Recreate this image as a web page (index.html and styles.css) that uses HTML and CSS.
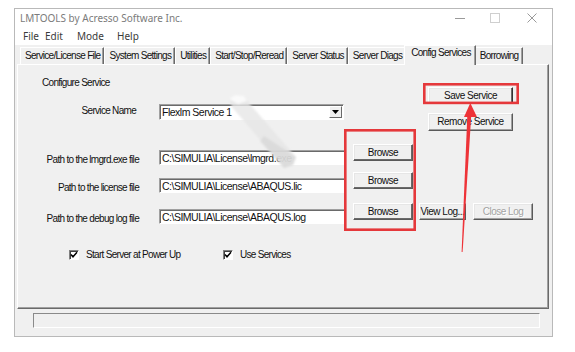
FILE: index.html
```html
<!DOCTYPE html>
<html>
<head>
<meta charset="utf-8">
<link rel="stylesheet" href="styles.css">
</head>
<body>
<div class="window">
  <div class="titlebar">
    <span class="title">LMTOOLS by Acresso Software Inc.</span>
    <div class="controls">
      <span class="ctl ctl-min"><svg width="10" height="10" viewBox="0 0 10 10"><path d="M0 5.5H10" stroke="#9a9a9a" stroke-width="1"/></svg></span>
      <span class="ctl ctl-max"><svg width="10" height="10" viewBox="0 0 10 10"><rect x="0.5" y="0.5" width="9" height="9" fill="none" stroke="#cfcfcf" stroke-width="1"/></svg></span>
      <span class="ctl ctl-close"><svg width="10" height="10" viewBox="0 0 10 10"><path d="M0.5 0.5L9.5 9.5M9.5 0.5L0.5 9.5" stroke="#9a9a9a" stroke-width="1"/></svg></span>
    </div>
  </div>
  <div class="menubar">
    <span class="menu m-file">File</span>
    <span class="menu m-edit">Edit</span>
    <span class="menu m-mode">Mode</span>
    <span class="menu m-help">Help</span>
  </div>
  <div class="tabs">
    <div class="tab">Service/License File</div>
    <div class="tab">System Settings</div>
    <div class="tab">Utilities</div>
    <div class="tab">Start/Stop/Reread</div>
    <div class="tab">Server Status</div>
    <div class="tab">Server Diags</div>
    <div class="tab tab-active">Config Services</div>
    <div class="tab">Borrowing</div>
  </div>
  <div class="panel">
    <div class="top">
      <div class="top-left">
        <div class="heading">Configure Service</div>
        <div class="name-row">
          <span class="lbl lbl-name">Service Name</span>
          <div class="combo">
            <span class="combo-text">Flexlm Service 1</span>
            <span class="drop"><svg width="7" height="4" viewBox="0 0 7 4"><path d="M0 0H7L3.5 4Z" fill="#000"/></svg></span>
          </div>
        </div>
      </div>
      <div class="top-right">
        <div class="btn btn-wide btn-default">Save Service</div>
        <div class="btn btn-wide btn-remove">Remove Service</div>
      </div>
    </div>
    <div class="path-row r1">
      <span class="lbl">Path to the lmgrd.exe file</span>
      <div class="field">C:\SIMULIA\License\lmgrd.exe</div>
      <div class="btn btn-browse">Browse</div>
    </div>
    <div class="path-row r2">
      <span class="lbl">Path to the license file</span>
      <div class="field">C:\SIMULIA\License\ABAQUS.lic</div>
      <div class="btn btn-browse">Browse</div>
    </div>
    <div class="path-row r3">
      <span class="lbl">Path to the debug log file</span>
      <div class="field">C:\SIMULIA\License\ABAQUS.log</div>
      <div class="btn btn-browse">Browse</div>
      <div class="btn btn-view">View Log...</div>
      <div class="btn btn-close btn-disabled">Close Log</div>
    </div>
    <div class="check-row">
      <div class="check-item check-first">
        <span class="box"><svg width="8" height="8" viewBox="0 0 8 8"><path d="M1 3.5L3 5.8L7 1.2" fill="none" stroke="#000" stroke-width="1.5"/></svg></span>
        <span>Start Server at Power Up</span>
      </div>
      <div class="check-item">
        <span class="box"><svg width="8" height="8" viewBox="0 0 8 8"><path d="M1 3.5L3 5.8L7 1.2" fill="none" stroke="#000" stroke-width="1.5"/></svg></span>
        <span>Use Services</span>
      </div>
    </div>
  </div>
  <div class="statusbar"></div>
</div>
<svg class="overlay" width="575" height="352" viewBox="0 0 575 352">
  <defs>
    <filter id="soft" x="-20%" y="-20%" width="140%" height="140%"><feGaussianBlur stdDeviation="1.3"/></filter>
  </defs>
  <g filter="url(#soft)">
    <path d="M229 99 L235 95 L244 96 L248 102 L296 157 L293 165 L284 168 L232 107 Z" fill="#e6e6e6" opacity="0.8"/>
    <path d="M264 136 L296 157 L293 165 L284 168 L260 141 Z" fill="#d6d6d6" opacity="0.7"/>
    <path d="M229 99 L235 95 L244 96 L247 101 L238 104 Z" fill="#fafafa"/>
  </g>
  <rect x="424.3" y="84.3" width="93.4" height="18.6" fill="none" stroke="#e5383b" stroke-width="2.6"/>
  <rect x="345.3" y="130.3" width="69.4" height="99.4" fill="none" stroke="#e5383b" stroke-width="2.6"/>
  <path d="M467.3 116 L471.2 116 L462.6 252 L461.6 252 Z" fill="#ee3338"/>
  <path d="M470.3 103 L477 117 L464 117 Z" fill="#ee3338"/>
</svg>
</body>
</html>
```

FILE: styles.css
```css
html, body {
  margin: 0;
  padding: 0;
}
body {
  width: 575px;
  height: 352px;
  overflow: hidden;
  background: #ffffff;
  position: relative;
  font-family: "Liberation Sans", Arial, sans-serif;
  font-size: 10px;
  letter-spacing: -0.7px;
  color: #111;
}
.window {
  margin: 8px 0 0 14px;
  width: 539px;
  height: 329px;
  box-sizing: border-box;
  border: 1px solid #b9b9b9;
  background: #f0f0f0;
  display: flex;
  flex-direction: column;
}
.titlebar {
  height: 18px;
  flex: none;
  display: flex;
  align-items: center;
  background: #ffffff;
  padding-left: 5px;
}
.title {
  font-family: "Noto Sans", "Open Sans", sans-serif;
  font-size: 10px;
  letter-spacing: 0;
  color: #7b7b7b;
  line-height: 16px;
  margin-top: -1px;
}
.controls {
  margin-left: auto;
  display: flex;
  height: 18px;
}
.ctl {
  display: flex;
  align-items: center;
  justify-content: center;
  height: 18px;
}
.ctl-min { width: 36px; }
.ctl-max { width: 34px; }
.ctl-close { width: 40px; }
.menubar {
  height: 18px;
  flex: none;
  display: flex;
  align-items: center;
  background: #ffffff;
  padding-left: 8px;
  font-family: "Noto Sans", "Open Sans", sans-serif;
  font-size: 10px;
  letter-spacing: 0;
  color: #3a3a3a;
}
.menu { display: inline-block; }
.m-file { width: 22px; }
.m-edit { width: 32px; }
.m-mode { width: 40px; }
.tabs {
  height: 19px;
  flex: none;
  display: flex;
  align-items: flex-end;
  padding-left: 5px;
}
.tab {
  height: 17px;
  box-sizing: border-box;
  padding: 0 3px 0 4px;
  line-height: 15px;
  border-left: 1px solid #ffffff;
  border-top: 1px solid #ffffff;
  border-right: 1px solid #6a6a6a;
  box-shadow: inset -1px 0 #a0a0a0;
  white-space: nowrap;
  background: #f0f0f0;
}
.tab-active {
  position: relative;
  z-index: 1;
  height: 20px;
  margin: 0 -1px -1px -2px;
  padding: 0 4px 0 6px;
  line-height: 13px;
}
.panel {
  height: 245px;
  flex: none;
  box-sizing: border-box;
  margin: 0 3px 0 2px;
  border-left: 1px solid #ffffff;
  border-top: 1px solid #ffffff;
  border-right: 1px solid #6a6a6a;
  border-bottom: 1px solid #6a6a6a;
  box-shadow: inset -1px -1px #a0a0a0;
  background: #f0f0f0;
}
.top {
  display: flex;
  align-items: flex-start;
}
.top-left {
  width: 326px;
}
.heading {
  margin: 11px 0 0 24px;
  line-height: 14px;
  height: 14px;
}
.name-row {
  margin-top: 14px;
  display: flex;
  height: 16px;
}
.lbl {
  width: 121px;
  flex: none;
  box-sizing: border-box;
  text-align: right;
  white-space: nowrap;
  line-height: 15px;
}
.lbl-name {
  padding-right: 3px;
  line-height: 13px;
}
.combo {
  margin-left: 20px;
  width: 185px;
  height: 16px;
  box-sizing: border-box;
  background: #ffffff;
  border-top: 1px solid #a0a0a0;
  border-left: 1px solid #a0a0a0;
  border-right: 1px solid #ffffff;
  border-bottom: 1px solid #ffffff;
  box-shadow: inset 1px 1px #6a6a6a;
  display: flex;
  align-items: center;
  padding: 1px 1px 0 2px;
}
.combo-text {
  flex: 1;
  line-height: 13px;
  font-size: 10.5px;
  letter-spacing: -0.5px;
}
.drop {
  width: 13px;
  height: 12px;
  box-sizing: border-box;
  background: #f0f0f0;
  border-top: 1px solid #ffffff;
  border-left: 1px solid #ffffff;
  border-right: 1px solid #6a6a6a;
  border-bottom: 1px solid #6a6a6a;
  display: flex;
  align-items: center;
  justify-content: center;
  margin-top: -1px;
}
.top-right {
  margin-left: 84px;
  margin-top: 22px;
  display: flex;
  flex-direction: column;
}
.btn {
  box-sizing: border-box;
  height: 17px;
  background: #f0f0f0;
  border-top: 1px solid #ffffff;
  border-left: 1px solid #ffffff;
  border-right: 1px solid #5a5a5a;
  border-bottom: 1px solid #5a5a5a;
  box-shadow: inset -1px -1px #a0a0a0, inset 1px 1px #e6e6e6;
  display: flex;
  align-items: center;
  justify-content: center;
  line-height: 14px;
  white-space: nowrap;
  flex: none;
  color: #111;
  letter-spacing: -0.5px;
}
.btn-wide { width: 85px; }
.btn-default {
  border-right-color: #333;
  border-bottom-color: #333;
  box-shadow: inset -1px -1px #6a6a6a, inset 1px 1px #e6e6e6;
}
.btn-remove {
  margin-top: 9px;
  height: 18px;
}
.path-row {
  display: flex;
  height: 17px;
}
.r1 { margin-top: 13px; }
.r2 { margin-top: 11px; }
.r3 { margin-top: 14px; }
.path-row .lbl {
  margin-top: 8px;
}
.field {
  margin-left: 20px;
  margin-top: 6px;
  width: 186px;
  height: 15px;
  box-sizing: border-box;
  flex: none;
  background: #ffffff;
  border-top: 1px solid #a0a0a0;
  border-left: 1px solid #a0a0a0;
  border-right: 1px solid #ffffff;
  border-bottom: 1px solid #ffffff;
  box-shadow: inset 1px 1px #6a6a6a;
  padding: 1px 0 0 2px;
  font-size: 10.5px;
  letter-spacing: -0.5px;
  line-height: 12px;
  white-space: nowrap;
  overflow: hidden;
}
.btn-browse {
  margin-left: 8px;
  width: 60px;
  box-shadow: inset -1px -1px #6a6a6a, inset 1px 1px #e6e6e6;
}
.btn-view {
  margin-left: 6px;
  width: 47px;
}
.btn-close {
  margin-left: 7px;
  width: 60px;
}
.btn-disabled {
  color: #a3a3a3;
  text-shadow: 1px 1px #ffffff;
}
.check-row {
  margin-top: 29px;
  height: 11px;
  display: flex;
  align-items: center;
  padding-left: 51px;
}
.check-item {
  display: flex;
  align-items: center;
  gap: 7px;
  line-height: 12px;
}
.check-first { width: 154px; }
.box {
  width: 10px;
  height: 10px;
  box-sizing: border-box;
  background: #ffffff;
  border-top: 1px solid #808080;
  border-left: 1px solid #808080;
  border-right: 1px solid #ffffff;
  border-bottom: 1px solid #ffffff;
  box-shadow: inset 1px 1px #404040;
  display: flex;
  align-items: center;
  justify-content: center;
}
.statusbar {
  margin: 4px 12px 0 18px;
  height: 15px;
  flex: none;
  box-sizing: border-box;
  border-top: 1px solid #8a8a8a;
  border-left: 1px solid #8a8a8a;
  border-right: 1px solid #ffffff;
  border-bottom: 1px solid #ffffff;
}
.overlay {
  position: absolute;
  left: 0;
  top: 0;
  pointer-events: none;
}
```
